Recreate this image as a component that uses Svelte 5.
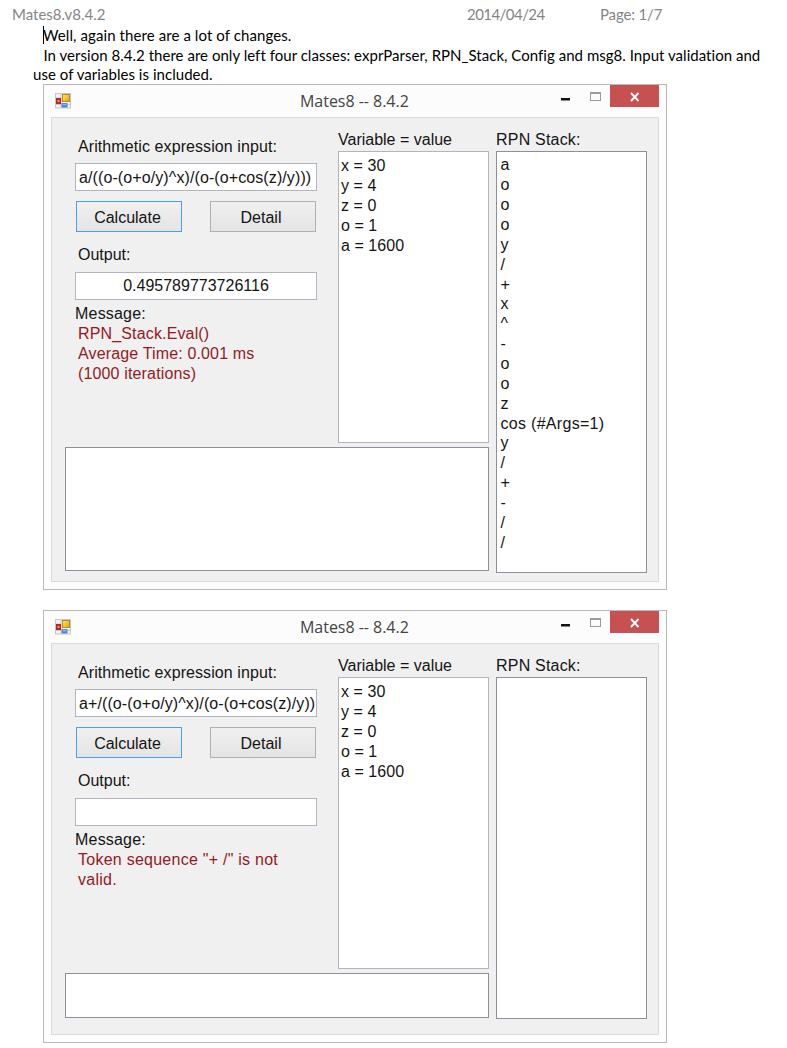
<script>
  const variables = ['x = 30', 'y = 4', 'z = 0', 'o = 1', 'a = 1600'];

  const windows = [
    {
      expression: 'a/((o-(o+o/y)^x)/(o-(o+cos(z)/y)))',
      output: '0.495789773726116',
      message: ['RPN_Stack.Eval()', 'Average Time: 0.001 ms', '(1000 iterations)'],
      stack: ['a', 'o', 'o', 'o', 'y', '/', '+', 'x', '^', '-', 'o', 'o', 'z', 'cos (#Args=1)', 'y', '/', '+', '-', '/', '/'],
      size: 'tall'
    },
    {
      expression: 'a+/((o-(o+o/y)^x)/(o-(o+cos(z)/y))',
      output: '',
      message: ['Token sequence "+ /" is not', 'valid.'],
      stack: [],
      size: 'short'
    }
  ];
</script>

<div class="page">
  <header>
    <span class="doc">Mates8.v8.4.2</span>
    <span class="date">2014/04/24</span>
    <span class="num">Page: 1/7</span>
  </header>
  <div class="intro">
    <p class="first"><i class="caret"></i>Well, again there are a lot of changes.</p>
    <p class="second">In version 8.4.2 there are only left four classes: exprParser, RPN_Stack, Config and msg8. Input validation and</p>
    <p class="third">use of variables is included.</p>
  </div>

  {#each windows as w}
    <section class="window {w.size}">
      <div class="titlebar">
        <svg class="appicon" width="16" height="16" viewBox="0 0 16 16">
          <defs>
            <linearGradient id="gold" x1="0" y1="0" x2="1" y2="1">
              <stop offset="0" stop-color="#ffe680" /><stop offset="1" stop-color="#dfa000" />
            </linearGradient>
          </defs>
          <rect x=".5" y=".5" width="15" height="14.5" fill="#f1f1f4" stroke="#c5c5ca" />
          <path d="M6 1v14M1 5h5M1 11.500h14" stroke="#c9c9d0" stroke-width="1" />
          <rect x="1" y="5" width="5" height="6" fill="#b5281f" />
          <rect x="2.500" y="7" width="2" height="2" fill="#ec9a8c" />
          <rect x="7.500" y="1.500" width="7" height="7" fill="url(#gold)" stroke="#c08c10" />
          <rect x="6.500" y="10" width="6" height="4.500" fill="#4a86e0" />
          <rect x="7.500" y="10.800" width="4" height="1.500" fill="#8ab6f5" />
        </svg>
        <h1>Mates8 -- 8.4.2</h1>
        <div class="controls">
          <svg width="45" height="22" viewBox="0 0 45 22">
            <rect x="1" y="13" width="9" height="2.500" fill="#111" />
            <rect x="30.500" y="7.500" width="10" height="8" fill="none" stroke="#9b9b9b" />
            <rect x="30" y="7" width="11" height="2" fill="#9b9b9b" />
          </svg>
          <span class="close">
            <svg width="49" height="22" viewBox="0 0 49 22">
              <path d="M21 8l7.500 8M28.500 8l-7.500 8" stroke="#fff" stroke-width="1.900" />
            </svg>
          </span>
        </div>
      </div>

      <div class="panel">
        <div class="main">
          <div class="upper">
            <div class="form">
              <div class="label l1">Arithmetic expression input:</div>
              <div class="field">{w.expression}</div>
              <div class="buttons">
                <button class="primary">Calculate</button>
                <button>Detail</button>
              </div>
              <div class="label l2">Output:</div>
              <div class="field output">{w.output}</div>
              <div class="label l3">Message:</div>
              <div class="message">
                {#each w.message as line}<div>{line}</div>{/each}
              </div>
            </div>
            <div class="vars">
              <div class="label">Variable = value</div>
              <div class="list soft">
                {#each variables as v}<div>{v}</div>{/each}
              </div>
            </div>
          </div>
          <div class="list log"></div>
        </div>
        <div class="stack">
          <div class="label">RPN Stack:</div>
          <div class="list">
            {#each w.stack as s}<div>{s}</div>{/each}
          </div>
        </div>
      </div>
    </section>
  {/each}
</div>

<style>
  :global(body) { background: #fff; }
  .page {
    box-sizing: border-box;
    width: 787px;
    height: 1048px;
    overflow: hidden;
    padding-top: 4px;
    font-family: "Liberation Sans", Arial, sans-serif;
    font-size: 16px;
    color: #141414;
  }
  header, .intro { font-family: Lato, Calibri, sans-serif; font-size: 15px; line-height: 20px; white-space: nowrap; }
  header { display: flex; height: 21px; padding-left: 12px; color: #858585; }
  .doc { width: 455px; }
  .date { width: 133px; letter-spacing: -0.55px; }
  .num { letter-spacing: -0.15px; }
  .intro { height: 59px; color: #000; }
  p { margin: 0; height: 20px; padding-left: 43px; }
  .first { position: relative; letter-spacing: 0.09px; }
  .second { height: 19px; padding-left: 43.5px; letter-spacing: 0.03px; }
  .third { padding-left: 33px; letter-spacing: 0.04px; }
  .caret { position: absolute; left: 43px; top: 1px; width: 1px; height: 18px; background: #000; }

  .window {
    box-sizing: border-box;
    width: 624px;
    margin-left: 43px;
    border: 1px solid #b9b9b9;
    background: #fcfcfc;
  }
  .tall { height: 506px; margin-bottom: 20px; }
  .short { height: 433px; }
  .titlebar { display: flex; height: 32px; }
  .appicon { margin: 8px 0 0 11px; }
  h1 {
    flex: 1;
    margin: 5px 0 0 229px;
    font: 400 16px/22px "Open Sans", "Segoe UI", sans-serif;
    letter-spacing: -0.03px;
    color: #444;
  }
  .controls { display: flex; margin-right: 7px; }
  .controls svg { display: block; }
  .controls > svg { margin-right: 5px; }
  .close { width: 49px; height: 22px; background: #c75050; }

  .panel {
    box-sizing: border-box;
    display: flex;
    width: 608px;
    margin-left: 7px;
    padding: 12px 0 0 13px;
    border: 1px solid #dadada;
    background: #f0f0f0;
  }
  .tall .panel { height: 465px; }
  .short .panel { height: 392px; }
  .main { width: 424px; margin-right: 7px; }
  .upper { display: flex; height: 317px; }
  .form { width: 242px; margin: 0 21px 0 10px; }
  .label { line-height: 20px; white-space: nowrap; }
  .l1 { margin-top: 7px; height: 26px; padding-left: 3px; letter-spacing: 0.09px; }
  .field {
    box-sizing: border-box;
    width: 242px;
    height: 28px;
    padding: 4px 3px 0;
    border: 1px solid #b2b5bf;
    background: #fff;
    line-height: 20px;
    letter-spacing: 0.1px;
    white-space: nowrap;
    overflow: hidden;
  }
  .output { padding-top: 3px; text-align: center; letter-spacing: 0; }
  .buttons { display: flex; gap: 28px; margin: 10px 0 13px 1px; }
  button {
    box-sizing: border-box;
    width: 106px;
    height: 31px;
    padding: 2px 4px 0 0;
    border: 1px solid #b0b0b0;
    border-radius: 0;
    background: linear-gradient(#f0f0f0, #e4e4e4);
    color: #141414;
    font: inherit;
    line-height: 27px;
  }
  .primary { border-color: #4a9ff5; padding-right: 3px; }
  .l2 { height: 27px; padding-left: 3px; }
  .l3 { margin-top: 4px; letter-spacing: 0.2px; }
  .message { padding-left: 3px; color: #951a1e; line-height: 20px; letter-spacing: 0.15px; white-space: nowrap; }
  .short .message { letter-spacing: 0.25px; }
  .vars { width: 151px; }
  .vars .label, .stack .label { height: 21px; }
  .stack .label { letter-spacing: 0.2px; }
  .list {
    box-sizing: border-box;
    border: 1px solid #8b919b;
    background: #fff;
    line-height: 19.860px;
    white-space: nowrap;
  }
  .soft { height: 292px; border-color: #b2b5bf; padding: 4.400px 0 0 2px; letter-spacing: 0.05px; }
  .stack { width: 151px; }
  .stack .list { padding: 3.400px 0 0 3.500px; letter-spacing: 0.3px; }
  .tall .stack .list { height: 422px; }
  .short .stack .list { height: 342px; }
  .log { width: 424px; }
  .tall .log { height: 124px; }
  .short .log { height: 45px; }
</style>
